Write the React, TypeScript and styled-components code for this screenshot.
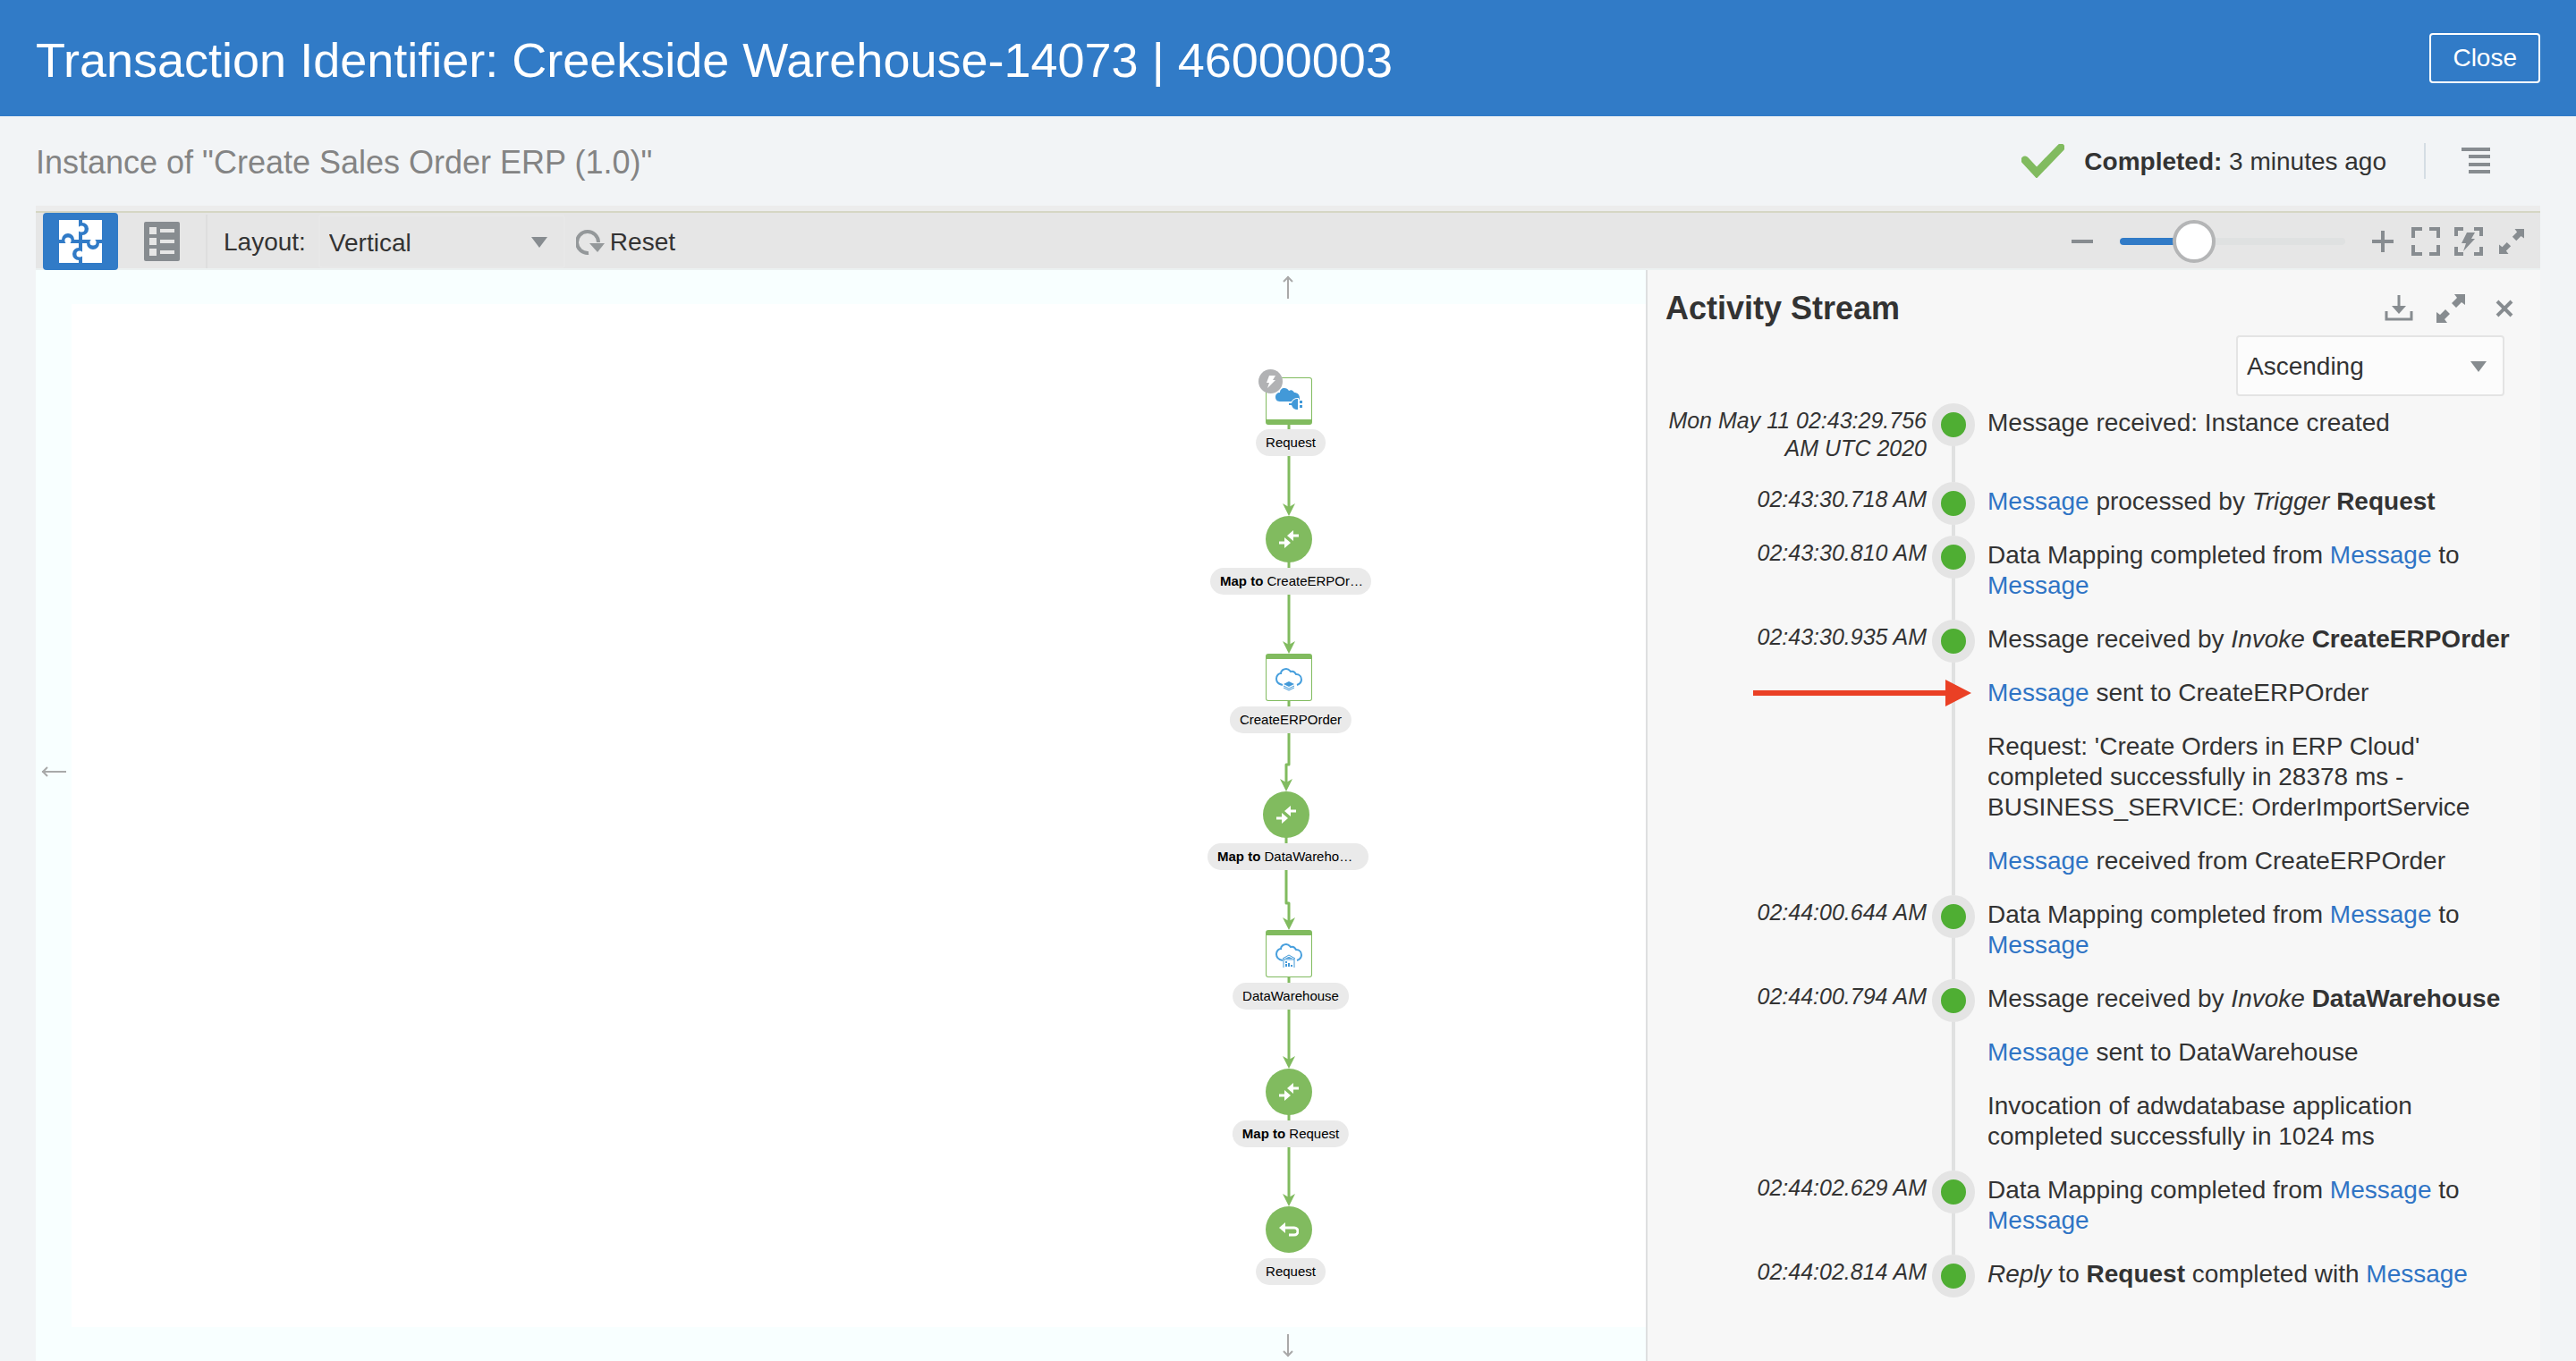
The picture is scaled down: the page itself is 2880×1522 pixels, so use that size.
import React from "react";
import styled, { createGlobalStyle } from "styled-components";

const blue = "#317bc7";
const green = "#81bb5f";
const iconGrey = "#878c90";
const ink = "#333333";

const GlobalStyle = createGlobalStyle`
  *, *::before, *::after { box-sizing: border-box; }
  body {
    margin: 0;
    background: #f2f4f6;
    color: ${ink};
    font-family: "Liberation Sans", Arial, sans-serif;
    font-size: 28px;
    line-height: 34px;
  }
  h1, h2, p, ol { margin: 0; padding: 0; }
  button, select, input { font: inherit; color: inherit; margin: 0; }
`;

const Page = styled.div`
  display: flex;
  flex-direction: column;
  min-height: 100vh;
`;

const Header = styled.header`
  display: flex;
  align-items: center;
  justify-content: space-between;
  height: 130px;
  padding: 0 40px;
  background: ${blue};
  color: #ffffff;
`;

const Title = styled.h1`
  padding-top: 4px;
  font-size: 54px;
  font-weight: 300;
  line-height: 68px;
`;

const CloseButton = styled.button`
  height: 56px;
  padding: 0 24px;
  border: 2px solid #ffffff;
  border-radius: 4px;
  background: transparent;
  font-weight: 500;
`;

const SubHeader = styled.div`
  display: flex;
  align-items: center;
  justify-content: space-between;
  height: 100px;
  padding: 0 40px;
`;

const InstanceName = styled.h2`
  padding-top: 4px;
  color: #848484;
  font-size: 36px;
  font-weight: 400;
  line-height: 44px;
`;

const Status = styled.div`
  display: flex;
  align-items: center;
  padding-right: 56px;
`;

const StatusText = styled.p`
  margin-left: 22px;
  padding: 2px 42px 0 0;
`;

const StatusMenu = styled.div`
  display: flex;
  align-items: center;
  height: 40px;
  padding-left: 40px;
  border-left: 2px solid #d5dde4;
`;

const IconButton = styled.button<{ $width?: number }>`
  display: flex;
  align-items: center;
  justify-content: center;
  width: ${(p) => (p.$width ? `${p.$width}px` : "auto")};
  padding: 0;
  border: 0;
  background: transparent;
  color: ${iconGrey};
`;

const Main = styled.main`
  display: flex;
  flex: 1;
  flex-direction: column;
  margin: 0 40px;
`;

const Toolbar = styled.div`
  display: flex;
  align-items: center;
  justify-content: space-between;
  height: 72px;
  padding: 0 16px 0 8px;
  border-top: 6px solid #ececec;
  background: linear-gradient(#d5d6c4 2px, #e6e6e6 2px, #e6e6e6 64px, #ecf1f1 64px);
`;

const ToolGroup = styled.div`
  display: flex;
  align-items: center;
  height: 100%;
  padding-top: 2px;
`;

const ViewButton = styled(IconButton)<{ $active?: boolean }>`
  width: ${(p) => (p.$active ? "84px" : "98px")};
  height: 64px;
  border-radius: 4px;
  background: ${(p) => (p.$active ? blue : "transparent")};
`;

const Divider = styled.span`
  width: 2px;
  height: 60px;
  margin-right: 18px;
  background: #dedede;
`;

const SelectBox = styled.div<{ $boxed?: boolean }>`
  position: relative;
  width: ${(p) => (p.$boxed ? "300px" : "276px")};
  height: ${(p) => (p.$boxed ? "68px" : "60px")};

  select {
    width: 100%;
    height: 100%;
    padding: ${(p) => (p.$boxed ? "2px" : "4px")} 10px 0;
    border: 2px solid ${(p) => (p.$boxed ? "#e4e4e4" : "#e8e8e8")};
    border-radius: 4px;
    background: ${(p) => (p.$boxed ? "#fcfcfc" : "#e6e6e6")};
    appearance: none;
  }

  svg {
    position: absolute;
    top: calc(50% - 5px);
    right: 20px;
    pointer-events: none;
  }
`;

const ResetButton = styled.button`
  display: flex;
  align-items: center;
  gap: 6px;
  margin-left: 12px;
  padding: 2px 0 0;
  border: 0;
  background: transparent;
`;

const LayoutLabel = styled.label`
  margin-right: 14px;
  padding-top: 2px;
`;

const ZoomRange = styled.input`
  width: 252px;
  height: 48px;
  margin: 0 30px;
  background: transparent;
  appearance: none;

  &::-webkit-slider-runnable-track {
    height: 8px;
    border-radius: 4px;
    background: linear-gradient(to right, ${blue} 33%, #dfe1e1 33%);
  }

  &::-webkit-slider-thumb {
    width: 48px;
    height: 48px;
    margin-top: -20px;
    border: 4px solid #b4b5b6;
    border-radius: 50%;
    background: #ffffff;
    appearance: none;
  }
`;

const ViewIcons = styled.div`
  display: flex;
  align-items: center;
  gap: 16px;
  margin-left: 20px;
`;

/* The canvas fills the whole stage and the stream panel covers its right part. */
const Stage = styled.div`
  display: grid;
  flex: 1;
  grid-template-columns: 1fr 1000px;
`;

const Canvas = styled.section`
  position: relative;
  grid-row: 1;
  grid-column: 1 / -1;
  border: 38px solid #f8ffff;
  border-width: 38px 40px;
  background: #ffffff;
`;

const PanHandle = styled.button<{ $side: "top" | "left" | "bottom" }>`
  position: absolute;
  display: flex;
  padding: 0;
  border: 0;
  background: transparent;
  color: #a9a9a9;
  ${(p) => p.$side === "top" && "top: -32px; left: calc(50% - 7px);"}
  ${(p) => p.$side === "bottom" && "bottom: -34px; left: calc(50% - 7px);"}
  ${(p) => p.$side === "left" && "left: -34px; top: calc(50% - 56px);"}
`;

const Board = styled.div`
  position: relative;
  width: 200px;
  height: 1100px;
  margin: 0 auto;
`;

const Edges = styled.svg`
  position: absolute;
  top: 0;
  left: 0;
`;

const NodeShape = styled.div<{ $x: number; $y: number; $kind: NodeKind }>`
  position: absolute;
  top: ${(p) => p.$y}px;
  left: ${(p) => p.$x - 26}px;
  display: flex;
  align-items: center;
  justify-content: center;
  width: 52px;
  height: ${(p) => (p.$kind === "map" || p.$kind === "reply" ? 52 : 53)}px;
  ${(p) =>
    p.$kind === "map" || p.$kind === "reply"
      ? `border-radius: 50%; background: ${green};`
      : `border: 1px solid ${green}; border-radius: 3px; background: #ffffff;
         border-${p.$kind === "trigger" ? "bottom" : "top"}-width: 6px;`}
`;

const NodeLabel = styled.div<{ $x: number; $y: number; $clipped: boolean }>`
  position: absolute;
  top: ${(p) => p.$y}px;
  left: ${(p) => p.$x + 2}px;
  width: ${(p) => (p.$clipped ? "180px" : "auto")};
  height: 30px;
  padding: 0 11px;
  border-radius: 15px;
  background: #eaeaea;
  color: #000000;
  font-size: 15px;
  line-height: 30px;
  white-space: nowrap;
  transform: translateX(-50%);
`;

const TriggerBadge = styled.span`
  position: absolute;
  top: -10px;
  left: -9px;
  display: flex;
  align-items: center;
  justify-content: center;
  width: 27px;
  height: 27px;
  border-radius: 50%;
  background: #b1b2b4;
`;

const Panel = styled.aside`
  z-index: 1;
  grid-row: 1;
  grid-column: 2;
  border-left: 2px solid #dedfe0;
  background: #f7f7f7;
`;

const PanelHeader = styled.div`
  display: flex;
  align-items: center;
  justify-content: space-between;
  height: 73px;
  padding: 12px 22px 0 20px;
`;

const PanelTitle = styled.h2`
  font-size: 36px;
  font-weight: 700;
  line-height: 44px;
`;

const PanelIcons = styled.div`
  display: flex;
  align-items: center;
  gap: 26px;
`;

const SortRow = styled.div`
  display: flex;
  justify-content: flex-end;
  padding-right: 40px;
`;

const Timeline = styled.ol`
  padding-top: 8px;
  list-style: none;
`;

const Entry = styled.li`
  display: grid;
  grid-template-columns: 304px 60px 1fr;
  padding-left: 8px;
`;

const Time = styled.time`
  padding-top: 4px;
  padding-bottom: 22px;
  font-size: 25px;
  font-style: italic;
  line-height: 31px;
  text-align: right;
`;

const Rail = styled.div<{ $last: boolean }>`
  display: flex;
  justify-content: center;
  background: ${(p) =>
    p.$last ? "none" : "linear-gradient(#e0e1e1, #e0e1e1) center 30px / 4px 100% no-repeat"};
`;

const Dot = styled.span`
  width: 48px;
  height: 48px;
  border: 10px solid #e4e4e4;
  border-radius: 50%;
  background: #4fae33;
`;

const Messages = styled.div`
  display: flex;
  flex-direction: column;
  gap: 26px;
  padding: 5px 20px 21px 8px;
`;

const Message = styled.p`
  position: relative;
`;

const Link = styled.a`
  color: #2f74c5;
  text-decoration: none;
`;

const Pointer = styled.svg`
  position: absolute;
  top: 2px;
  right: calc(100% + 18px);
`;

type NodeKind = "trigger" | "map" | "erp" | "warehouse" | "reply";

const Caret = () => (
  <svg width="18" height="12" aria-hidden="true">
    <path d="M0 0h18L9 12z" fill={iconGrey} />
  </svg>
);

const CheckIcon = () => (
  <svg width="48" height="38" viewBox="0 0 48 38" aria-hidden="true">
    <path d="M4 18l13 14L44 4" fill="none" stroke={green} strokeWidth="9" strokeLinecap="round" />
  </svg>
);

const MenuIcon = () => (
  <svg width="32" height="30" aria-hidden="true">
    <path d="M0 2h32M8 10h24M8 19h24M8 27h24" stroke={iconGrey} strokeWidth="4" />
  </svg>
);

const PuzzleIcon = () => (
  <svg width="48" height="48" aria-hidden="true">
    <path d="M0 0h22v22H0zM26 0h22v22H26zM0 26h22v22H0zM26 26h22v22H26z" fill="#fff" />
    <path
      d="M22 3h4a7 7 0 0 1 0 14h-4zM3 26v-4a7 7 0 0 1 14 0v4zM31 22v4a7 7 0 0 0 14 0v-4zM26 31h-4a7 7 0 0 0 0 14h4z"
      fill={blue}
    />
    <g fill="#fff">
      <circle cx="25" cy="10" r="3.6" />
      <circle cx="10" cy="23" r="3.6" />
      <circle cx="38" cy="25" r="3.6" />
      <circle cx="23" cy="38" r="3.6" />
      <path d="M19 6h3v8h-3zM6 26h8v3H6zM34 19h8v3h-8zM26 34h3v8h-3z" />
    </g>
  </svg>
);

const ListIcon = () => (
  <svg width="40" height="44" aria-hidden="true">
    <rect width="40" height="44" rx="2" fill={iconGrey} />
    <path
      d="M6 6h8v8H6zM18 8h16v4H18zM6 18h8v8H6zM18 20h16v4H18zM6 30h8v8H6zM18 32h16v4H18z"
      fill="#e6e6e6"
    />
  </svg>
);

const ResetIcon = () => (
  <svg width="32" height="30" viewBox="0 0 32 30" aria-hidden="true">
    <path d="M14 27A12 12 0 1 1 25 15" fill="none" stroke="#94989a" strokeWidth="4" />
    <path d="M15 16h17l-8 10z" fill="#94989a" />
  </svg>
);

const MinusIcon = () => (
  <svg width="24" height="24" aria-hidden="true">
    <path d="M0 12h24" stroke={iconGrey} strokeWidth="4" />
  </svg>
);

const PlusIcon = () => (
  <svg width="24" height="24" aria-hidden="true">
    <path d="M0 12h24M12 0v24" stroke={iconGrey} strokeWidth="4" />
  </svg>
);

const FitIcon = () => (
  <svg width="32" height="32" aria-hidden="true">
    <path d="M2 12V2h10M20 2h10v10M30 20v10H20M12 30H2V20" fill="none" stroke={iconGrey} strokeWidth="4" />
  </svg>
);

const FitTriggerIcon = () => (
  <svg width="32" height="32" aria-hidden="true">
    <path d="M2 10V2h8M22 2h8v8M30 22v8h-8M10 30H2v-8" fill="none" stroke={iconGrey} strokeWidth="4" />
    <path d="M14 6h9l-4 7h4L10 27l3-9H8z" fill={iconGrey} />
  </svg>
);

const ExpandIcon = ({ size }: { size: number }) => (
  <svg width={size} height={size} viewBox="0 0 32 32" aria-hidden="true">
    <path
      d="M20 0h12v12l-4-3-6 6-5-5 6-6zM12 32H0V20l4 3 6-6 5 5-6 6z"
      fill={iconGrey}
    />
  </svg>
);

const DownloadIcon = () => (
  <svg width="32" height="30" aria-hidden="true">
    <path d="M2 18v9h28v-9" fill="none" stroke={iconGrey} strokeWidth="3" />
    <path d="M16 0v16" stroke={iconGrey} strokeWidth="3" />
    <path d="M8 12h16l-8 9z" fill={iconGrey} />
  </svg>
);

const CrossIcon = () => (
  <svg width="20" height="20" aria-hidden="true">
    <path d="M2 2l16 16M18 2L2 18" stroke={iconGrey} strokeWidth="4" />
  </svg>
);

const UpArrow = () => (
  <svg width="14" height="26" viewBox="0 0 14 26" aria-hidden="true">
    <path d="M7 1v25" stroke="currentColor" strokeWidth="2" />
    <path d="M2 7l5-5 5 5" fill="none" stroke="currentColor" strokeWidth="2" />
  </svg>
);

const DownArrow = () => (
  <svg width="14" height="26" viewBox="0 0 14 26" aria-hidden="true">
    <path d="M7 0v25" stroke="currentColor" strokeWidth="2" />
    <path d="M2 19l5 5 5-5" fill="none" stroke="currentColor" strokeWidth="2" />
  </svg>
);

const LeftArrow = () => (
  <svg width="28" height="14" viewBox="0 0 28 14" aria-hidden="true">
    <path d="M1 7h27" stroke="currentColor" strokeWidth="2" />
    <path d="M7 2L2 7l5 5" fill="none" stroke="currentColor" strokeWidth="2" />
  </svg>
);

const cloudOutline =
  "M8 19C3 18 1 15 1 12C1 8 4 6 6 6C6 3 9 1 12 1C15 1 16 3 17 4C20 3 22 5 23 7C27 7 29 10 29 13C29 16 27 18 24 19";

const NodeGlyph = ({ kind }: { kind: NodeKind }) => {
  if (kind === "trigger") {
    return (
      <svg width="32" height="26" viewBox="0 0 32 26" aria-hidden="true">
        <path
          d="M6 16C2 16 1 13 1 11C1 8 3 6 6 6C6 3 8 1 11 1C13 1 15 2 16 4C19 2 21 4 22 6C25 6 28 8 28 12C28 14 26 16 24 16Z"
          fill="#4299d8"
        />
        <path
          d="M16 18h3c1-3 3-5 7-5v12c-4 0-6-2-7-5h-3z"
          fill="#4299d8"
          stroke="#fff"
          strokeWidth="2"
          paintOrder="stroke"
        />
        <path d="M28 15h3v3h-3zM28 20h3v3h-3z" fill="#4299d8" />
      </svg>
    );
  }
  if (kind === "erp") {
    return (
      <svg width="30" height="27" viewBox="0 0 30 27" aria-hidden="true">
        <path d={cloudOutline} fill="none" stroke="#479fdd" strokeWidth="2" />
        <path d="M9 18l6-3 6 3-6 3z" fill="#4299d8" />
        <path d="M9 20l6 3 6-3M9 22l6 3 6-3" fill="none" stroke="#4299d8" />
      </svg>
    );
  }
  if (kind === "warehouse") {
    return (
      <svg width="30" height="28" viewBox="0 0 30 28" aria-hidden="true">
        <path d={cloudOutline} fill="none" stroke="#479fdd" strokeWidth="2" />
        <path d="M8 17l7-4 7 4" fill="none" stroke="#4299d8" />
        <path d="M10 17l5-2 5 2z" fill="#4299d8" />
        <path d="M9 17v10M21 17v10M9 18h12" stroke="#4299d8" />
        <path d="M11 20h2v2h-2zM11 23h2v3h-2zM14 22h2v4h-2zM17 24h2v2h-2z" fill="#4299d8" />
      </svg>
    );
  }
  if (kind === "reply") {
    return (
      <svg width="22" height="16" viewBox="0 0 22 16" aria-hidden="true">
        <path d="M5 6h12a4 4 0 0 1 0 8h-6" fill="none" stroke="#fff" strokeWidth="3" />
        <path d="M0 6l7-6v12z" fill="#fff" />
      </svg>
    );
  }
  return (
    <svg width="22" height="20" viewBox="0 0 22 20" aria-hidden="true">
      <path d="M14 6h8M0 14h8" stroke="#fff" strokeWidth="3" />
      <path d="M9 6l7-6v12zM13 14l-7 6V8z" fill="#fff" />
    </svg>
  );
};

type FlowNode = { kind: NodeKind; x: number; y: number; labelY: number; prefix?: string; name: string };

const nodes: FlowNode[] = [
  { kind: "trigger", x: 101, y: 82, labelY: 140, name: "Request" },
  { kind: "map", x: 101, y: 237, labelY: 295, prefix: "Map to", name: "CreateERPOr…" },
  { kind: "erp", x: 101, y: 391, labelY: 450, name: "CreateERPOrder" },
  { kind: "map", x: 98, y: 545, labelY: 603, prefix: "Map to", name: "DataWareho…" },
  { kind: "warehouse", x: 101, y: 700, labelY: 759, name: "DataWarehouse" },
  { kind: "map", x: 101, y: 855, labelY: 913, prefix: "Map to", name: "Request" },
  { kind: "reply", x: 101, y: 1009, labelY: 1067, name: "Request" },
];

const edges = [
  { path: "M101 130V232", x: 101, y: 237 },
  { path: "M101 285V386", x: 101, y: 391 },
  { path: "M101 440V515H98V540", x: 98, y: 545 },
  { path: "M98 590V670H101V695", x: 101, y: 700 },
  { path: "M101 750V850", x: 101, y: 855 },
  { path: "M101 900V1004", x: 101, y: 1009 },
];

const Diagram = () => (
  <Board>
    <Edges width="200" height="1100" aria-hidden="true">
      {edges.map((e) => (
        <g key={e.y}>
          <path d={e.path} fill="none" stroke={green} strokeWidth="3" strokeLinejoin="round" />
          <path d={`M${e.x} ${e.y}l-7 -14 7 4 7 -4z`} fill={green} />
        </g>
      ))}
    </Edges>
    {nodes.map((n) => (
      <React.Fragment key={n.y}>
        <NodeShape $x={n.x} $y={n.y} $kind={n.kind}>
          {n.kind === "trigger" && (
            <TriggerBadge>
              <svg width="12" height="14" aria-hidden="true">
                <path d="M4 0h7L8 5h3L2 14l2-6H1z" fill="#fff" />
              </svg>
            </TriggerBadge>
          )}
          <NodeGlyph kind={n.kind} />
        </NodeShape>
        <NodeLabel $x={n.x} $y={n.labelY} $clipped={n.name.endsWith("…")}>
          {n.prefix && <b>{n.prefix} </b>}
          {n.name}
        </NodeLabel>
      </React.Fragment>
    ))}
  </Board>
);

const Msg = () => <Link href="#message">Message</Link>;

const Mapping = () => (
  <>
    Data Mapping completed from <Msg /> to <Msg />
  </>
);

const RedPointer = () => (
  <Pointer width="244" height="30" aria-hidden="true">
    <path d="M0 12h215V0l29 15-29 15V18H0z" fill="#ea4025" />
  </Pointer>
);

const entries: { time: string; messages: React.ReactNode[] }[] = [
  { time: "Mon May 11 02:43:29.756 AM UTC 2020", messages: ["Message received: Instance created"] },
  { time: "02:43:30.718 AM", messages: [<><Msg /> processed by <i>Trigger</i> <b>Request</b></>] },
  { time: "02:43:30.810 AM", messages: [<Mapping />] },
  {
    time: "02:43:30.935 AM",
    messages: [
      <>Message received by <i>Invoke</i> <b>CreateERPOrder</b></>,
      <><RedPointer /><Msg /> sent to CreateERPOrder</>,
      "Request: 'Create Orders in ERP Cloud' completed successfully in 28378 ms - BUSINESS_SERVICE: OrderImportService",
      <><Msg /> received from CreateERPOrder</>,
    ],
  },
  { time: "02:44:00.644 AM", messages: [<Mapping />] },
  {
    time: "02:44:00.794 AM",
    messages: [
      <>Message received by <i>Invoke</i> <b>DataWarehouse</b></>,
      <><Msg /> sent to DataWarehouse</>,
      "Invocation of adwdatabase application completed successfully in 1024 ms",
    ],
  },
  { time: "02:44:02.629 AM", messages: [<Mapping />] },
  { time: "02:44:02.814 AM", messages: [<><i>Reply</i> to <b>Request</b> completed with <Msg /></>] },
];

export default function App() {
  return (
    <Page>
      <GlobalStyle />
      <Header>
        <Title>Transaction Identifier: Creekside Warehouse-14073 | 46000003</Title>
        <CloseButton type="button">Close</CloseButton>
      </Header>
      <SubHeader>
        <InstanceName>Instance of "Create Sales Order ERP (1.0)"</InstanceName>
        <Status>
          <CheckIcon />
          <StatusText>
            <b>Completed:</b> 3 minutes ago
          </StatusText>
          <StatusMenu>
            <IconButton type="button" aria-label="Menu"><MenuIcon /></IconButton>
          </StatusMenu>
        </Status>
      </SubHeader>
      <Main>
        <Toolbar>
          <ToolGroup>
            <ViewButton type="button" aria-label="Diagram view" $active><PuzzleIcon /></ViewButton>
            <ViewButton type="button" aria-label="List view"><ListIcon /></ViewButton>
            <Divider />
            <LayoutLabel htmlFor="layout">Layout:</LayoutLabel>
            <SelectBox>
              <select id="layout" defaultValue="Vertical">
                <option>Vertical</option>
                <option>Horizontal</option>
              </select>
              <Caret />
            </SelectBox>
            <ResetButton type="button"><ResetIcon />Reset</ResetButton>
          </ToolGroup>
          <ToolGroup>
            <IconButton type="button" aria-label="Zoom out"><MinusIcon /></IconButton>
            <ZoomRange type="range" min="0" max="100" defaultValue="29" aria-label="Zoom" />
            <IconButton type="button" aria-label="Zoom in"><PlusIcon /></IconButton>
            <ViewIcons>
              <IconButton type="button" aria-label="Fit to view"><FitIcon /></IconButton>
              <IconButton type="button" aria-label="Fit trigger"><FitTriggerIcon /></IconButton>
              <IconButton type="button" aria-label="Full screen" $width={32}><ExpandIcon size={28} /></IconButton>
            </ViewIcons>
          </ToolGroup>
        </Toolbar>
        <Stage>
          <Canvas>
            <PanHandle type="button" aria-label="Pan up" $side="top"><UpArrow /></PanHandle>
            <PanHandle type="button" aria-label="Pan left" $side="left"><LeftArrow /></PanHandle>
            <PanHandle type="button" aria-label="Pan down" $side="bottom"><DownArrow /></PanHandle>
            <Diagram />
          </Canvas>
          <Panel>
            <PanelHeader>
              <PanelTitle>Activity Stream</PanelTitle>
              <PanelIcons>
                <IconButton type="button" aria-label="Download"><DownloadIcon /></IconButton>
                <IconButton type="button" aria-label="Expand"><ExpandIcon size={32} /></IconButton>
                <IconButton type="button" aria-label="Close panel" $width={36}><CrossIcon /></IconButton>
              </PanelIcons>
            </PanelHeader>
            <SortRow>
              <SelectBox $boxed>
                <select aria-label="Sort order" defaultValue="Ascending">
                  <option>Ascending</option>
                  <option>Descending</option>
                </select>
                <Caret />
              </SelectBox>
            </SortRow>
            <Timeline>
              {entries.map((entry, i) => (
                <Entry key={entry.time}>
                  <Time>{entry.time}</Time>
                  <Rail $last={i === entries.length - 1}><Dot /></Rail>
                  <Messages>
                    {entry.messages.map((m, j) => (
                      <Message key={j}>{m}</Message>
                    ))}
                  </Messages>
                </Entry>
              ))}
            </Timeline>
          </Panel>
        </Stage>
      </Main>
    </Page>
  );
}
